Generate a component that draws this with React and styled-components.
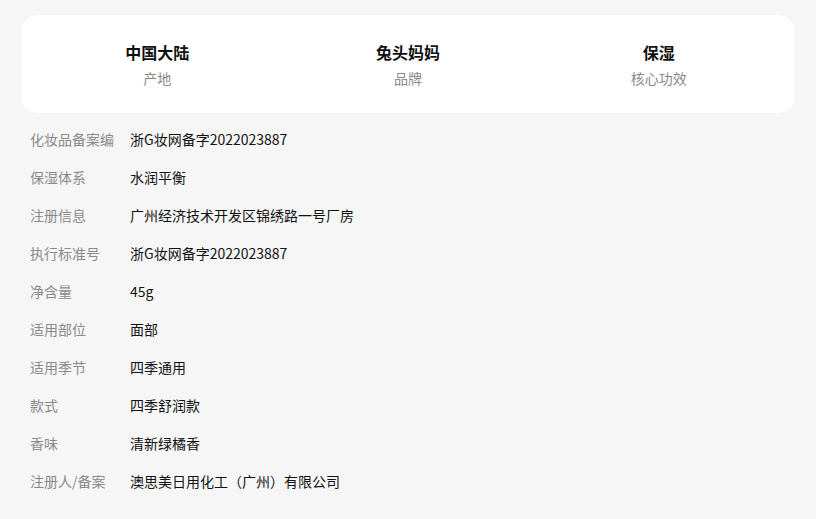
import React from "react";
import styled, { createGlobalStyle } from "styled-components";

const Global = createGlobalStyle`
  html, body { margin: 0; padding: 0; background: #f6f6f6; }
  body { font-family: "Noto Sans CJK SC", "Noto Sans", sans-serif; }
`;

const Page = styled.div`
  padding: 15px 22px 0;
  background: #f6f6f6;
  min-height: 519px;
  box-sizing: border-box;
`;

const Card = styled.div`
  display: grid;
  grid-template-columns: repeat(3, 1fr);
  background: #ffffff;
  border-radius: 16px;
  padding: 0 10px;
  height: 98px;
  align-items: center;
  margin-bottom: 7px;
`;

const Stat = styled.div`
  display: flex;
  flex-direction: column;
  align-items: center;
`;

const StatValue = styled.div`
  font-size: 16px;
  font-weight: 700;
  color: #111;
  line-height: 22px;
`;

const StatLabel = styled.div`
  font-size: 14px;
  color: #888;
  line-height: 20px;
  margin-top: 5px;
`;

const List = styled.div`
  display: flex;
  flex-direction: column;
  padding-left: 8px;
`;

const Row = styled.div`
  display: flex;
  align-items: center;
  height: 38px;
  font-size: 14px;
`;

const Label = styled.div`
  width: 100px;
  flex-shrink: 0;
  color: #8a8a8a;
`;

const Value = styled.div`
  color: #111;
`;

const stats = [
  ["中国大陆", "产地"],
  ["兔头妈妈", "品牌"],
  ["保湿", "核心功效"],
];

const rows = [
  ["化妆品备案编", "浙G妆网备字2022023887"],
  ["保湿体系", "水润平衡"],
  ["注册信息", "广州经济技术开发区锦绣路一号厂房"],
  ["执行标准号", "浙G妆网备字2022023887"],
  ["净含量", "45g"],
  ["适用部位", "面部"],
  ["适用季节", "四季通用"],
  ["款式", "四季舒润款"],
  ["香味", "清新绿橘香"],
  ["注册人/备案", "澳思美日用化工（广州）有限公司"],
];

export default function App() {
  return (
    <>
      <Global />
      <Page>
        <Card>
          {stats.map(([v, l]) => (
            <Stat key={l}>
              <StatValue>{v}</StatValue>
              <StatLabel>{l}</StatLabel>
            </Stat>
          ))}
        </Card>
        <List>
          {rows.map(([l, v]) => (
            <Row key={l}>
              <Label>{l}</Label>
              <Value>{v}</Value>
            </Row>
          ))}
        </List>
      </Page>
    </>
  );
}
